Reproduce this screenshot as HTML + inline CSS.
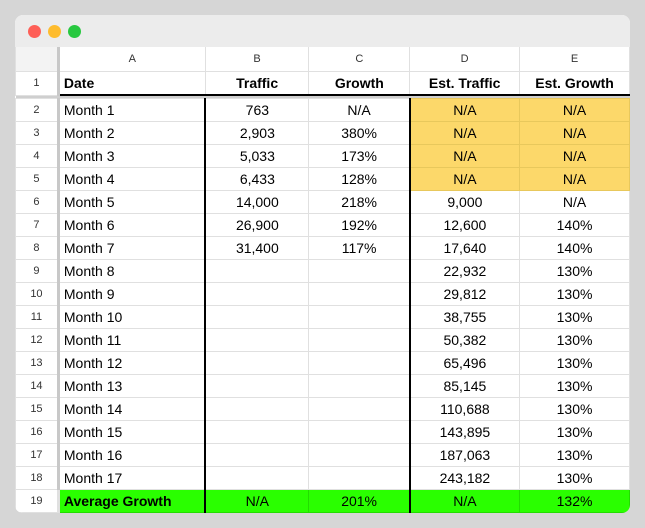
<!DOCTYPE html><html><head><style>
body{margin:0;width:645px;height:528px;background:#d6d6d6;font-family:"Liberation Sans",sans-serif;position:relative;overflow:hidden}
.win{position:absolute;left:15px;top:15px;width:615px;height:498px;background:#fff;border-radius:8px;overflow:hidden}
.tb{position:absolute;left:0;top:0;width:615px;height:32px;background:#ececec}
.dot{position:absolute;top:10px;width:13px;height:13px;border-radius:50%}
table{position:absolute;left:0;top:32px;border-collapse:collapse;table-layout:fixed}
td{border:1px solid #e0e0e0;font-size:14px;color:#000;height:22px;padding:0 4px;text-align:center;white-space:nowrap;overflow:hidden}
td.rh{font-size:11px;color:#333;background:#fff;border-right:3px solid #c8c8c8}
tr.ch td{font-size:11px;color:#333;height:24px;border-top:none}
tr.ch td.rh{background:#f3f3f3}
td.l{text-align:left}
tr.h td{font-weight:bold;height:22px;border-bottom:2px solid #000}
tr.h td.rh{border-bottom:1px solid #e0e0e0;font-weight:normal}
tr.sep td{height:2px;padding:0;background:#cfcfcf;border:none}
.y{background:#fcd86a;border-color:#e8c85c}
.bl{border-left:2px solid #000}
tr.g td{background:#2aff00;font-weight:normal;border-color:#22dd00}
tr.g td.rh{background:#fff;border-color:#e0e0e0}
</style></head><body>
<div class="win">
<div class="tb"><div class="dot" style="left:13px;background:#fe5f57"></div><div class="dot" style="left:33px;background:#febc2e"></div><div class="dot" style="left:53px;background:#28c840"></div></div>
<table>
<colgroup><col style="width:43px"><col style="width:147px"><col style="width:104px"><col style="width:101px"><col style="width:110px"><col style="width:110px"></colgroup>
<tr class="ch"><td class="rh"></td><td>A</td><td>B</td><td>C</td><td>D</td><td>E</td></tr>
<tr class="h"><td class="rh">1</td><td class="l">Date</td><td>Traffic</td><td>Growth</td><td>Est. Traffic</td><td>Est. Growth</td></tr>
<tr class="sep"><td></td><td></td><td></td><td></td><td></td><td></td></tr>
<tr><td class="rh">2</td><td class="l">Month 1</td><td class="bl">763</td><td>N/A</td><td class="y bl">N/A</td><td class="y">N/A</td></tr>
<tr><td class="rh">3</td><td class="l">Month 2</td><td class="bl">2,903</td><td>380%</td><td class="y bl">N/A</td><td class="y">N/A</td></tr>
<tr><td class="rh">4</td><td class="l">Month 3</td><td class="bl">5,033</td><td>173%</td><td class="y bl">N/A</td><td class="y">N/A</td></tr>
<tr><td class="rh">5</td><td class="l">Month 4</td><td class="bl">6,433</td><td>128%</td><td class="y bl">N/A</td><td class="y">N/A</td></tr>
<tr><td class="rh">6</td><td class="l">Month 5</td><td class="bl">14,000</td><td>218%</td><td class="bl">9,000</td><td>N/A</td></tr>
<tr><td class="rh">7</td><td class="l">Month 6</td><td class="bl">26,900</td><td>192%</td><td class="bl">12,600</td><td>140%</td></tr>
<tr><td class="rh">8</td><td class="l">Month 7</td><td class="bl">31,400</td><td>117%</td><td class="bl">17,640</td><td>140%</td></tr>
<tr><td class="rh">9</td><td class="l">Month 8</td><td class="bl"></td><td></td><td class="bl">22,932</td><td>130%</td></tr>
<tr><td class="rh">10</td><td class="l">Month 9</td><td class="bl"></td><td></td><td class="bl">29,812</td><td>130%</td></tr>
<tr><td class="rh">11</td><td class="l">Month 10</td><td class="bl"></td><td></td><td class="bl">38,755</td><td>130%</td></tr>
<tr><td class="rh">12</td><td class="l">Month 11</td><td class="bl"></td><td></td><td class="bl">50,382</td><td>130%</td></tr>
<tr><td class="rh">13</td><td class="l">Month 12</td><td class="bl"></td><td></td><td class="bl">65,496</td><td>130%</td></tr>
<tr><td class="rh">14</td><td class="l">Month 13</td><td class="bl"></td><td></td><td class="bl">85,145</td><td>130%</td></tr>
<tr><td class="rh">15</td><td class="l">Month 14</td><td class="bl"></td><td></td><td class="bl">110,688</td><td>130%</td></tr>
<tr><td class="rh">16</td><td class="l">Month 15</td><td class="bl"></td><td></td><td class="bl">143,895</td><td>130%</td></tr>
<tr><td class="rh">17</td><td class="l">Month 16</td><td class="bl"></td><td></td><td class="bl">187,063</td><td>130%</td></tr>
<tr><td class="rh">18</td><td class="l">Month 17</td><td class="bl"></td><td></td><td class="bl">243,182</td><td>130%</td></tr>
<tr class="g"><td class="rh">19</td><td class="l" style="font-weight:bold">Average Growth</td><td class="bl" style="border-left-color:#000">N/A</td><td>201%</td><td class="bl" style="border-left-color:#000">N/A</td><td>132%</td></tr>
</table>
</div>
</body></html>
